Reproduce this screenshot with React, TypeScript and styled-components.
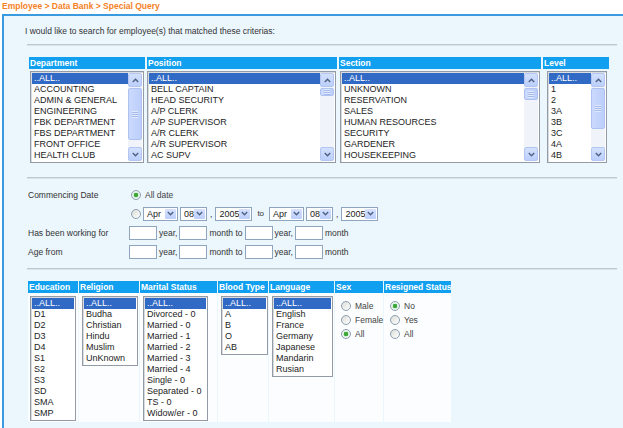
import styled, { createGlobalStyle } from "styled-components";

const GlobalStyle = createGlobalStyle`
  html, body {
    margin: 0;
    padding: 0;
    background: #ffffff;
    overflow: hidden;
  }
  body {
    font-family: "Liberation Sans", Arial, sans-serif;
    font-size: 8.5px;
    color: #333;
  }
`;

type Scroll = { top: number; size: number };

type ListProps = {
	items: string[];
	width: number;
	scroll?: Scroll;
};

const departments = ["..ALL..", "ACCOUNTING", "ADMIN & GENERAL", "ENGINEERING", "FBK DEPARTMENT", "FBS DEPARTMENT", "FRONT OFFICE", "HEALTH CLUB"];
const positions = ["..ALL..", "BELL CAPTAIN", "HEAD SECURITY", "A/P CLERK", "A/P SUPERVISOR", "A/R CLERK", "A/R SUPERVISOR", "AC SUPV"];
const sections = ["..ALL..", "UNKNOWN", "RESERVATION", "SALES", "HUMAN RESOURCES", "SECURITY", "GARDENER", "HOUSEKEEPING"];
const levels = ["..ALL..", "1", "2", "3A", "3B", "3C", "4A", "4B"];

const education = ["..ALL..", "D1", "D2", "D3", "D4", "S1", "S2", "S3", "SD", "SMA", "SMP"];
const religion = ["..ALL..", "Budha", "Christian", "Hindu", "Muslim", "UnKnown"];
const marital = [
	"..ALL..",
	"Divorced - 0",
	"Married - 0",
	"Married - 1",
	"Married - 2",
	"Married - 3",
	"Married - 4",
	"Single - 0",
	"Separated - 0",
	"TS - 0",
	"Widow/er - 0",
];
const blood = ["..ALL..", "A", "B", "O", "AB"];
const language = ["..ALL..", "English", "France", "Germany", "Japanese", "Mandarin", "Rusian"];

const Chevron = ({ up }: { up?: boolean }) => (
	<svg width="7" height="5" viewBox="0 0 7 5">
		<polyline
			points={up ? "0.8,4 3.5,1.3 6.2,4" : "0.8,1 3.5,3.7 6.2,1"}
			fill="none"
			stroke="#4d6185"
			strokeWidth="1.4"
		/>
	</svg>
);

const ListBox = ({ items, width, scroll }: ListProps) => (
	<Box $width={width}>
		<Items>
			{items.map((item, i) => (
				<Item key={item} $selected={i === 0}>
					{item}
				</Item>
			))}
		</Items>
		{scroll && (
			<ScrollBar>
				<ScrollButton>
					<Chevron up />
				</ScrollButton>
				<Track>
					<Thumb style={{ marginTop: scroll.top, height: scroll.size }} />
				</Track>
				<ScrollButton>
					<Chevron />
				</ScrollButton>
			</ScrollBar>
		)}
	</Box>
);

const Combo = ({ value, width }: { value: string; width: number }) => (
	<ComboBox $width={width}>
		<ComboValue>{value}</ComboValue>
		<ComboArrow>
			<Chevron />
		</ComboArrow>
	</ComboBox>
);

const RadioOption = ({ label, checked }: { label: string; checked?: boolean }) => (
	<RadioLine>
		<Radio $checked={checked} />
		<span>{label}</span>
	</RadioLine>
);

const DurationInputs = () => (
	<Controls>
		<TextInput />
		<Unit>year,</Unit>
		<TextInput />
		<Unit>month to</Unit>
		<TextInput />
		<Unit>year,</Unit>
		<TextInput />
		<Unit>month</Unit>
	</Controls>
);

export default function App() {
	return (
		<>
			<GlobalStyle />
			<Breadcrumb>Employee &gt; Data Bank &gt; Special Query</Breadcrumb>
			<Panel>
				<Intro>I would like to search for employee(s) that matched these criterias:</Intro>
				<Divider />

				<TopGrid>
					<Column>
						<HeaderBar>Department</HeaderBar>
						<TopCell $indent={1}>
							<ListBox items={departments} width={114} scroll={{ top: 1, size: 52 }} />
						</TopCell>
					</Column>
					<Column>
						<HeaderBar>Position</HeaderBar>
						<TopCell $indent={0}>
							<ListBox items={positions} width={189} scroll={{ top: 1, size: 8 }} />
						</TopCell>
					</Column>
					<Column>
						<HeaderBar>Section</HeaderBar>
						<TopCell $indent={1}>
							<ListBox items={sections} width={200} scroll={{ top: 1, size: 12 }} />
						</TopCell>
					</Column>
					<Column>
						<HeaderBar>Level</HeaderBar>
						<TopCell $indent={4}>
							<ListBox items={levels} width={60} scroll={{ top: 1, size: 41 }} />
						</TopCell>
					</Column>
				</TopGrid>

				<Divider $gap={14} />

				<Form>
					<Label>Commencing Date</Label>
					<Controls>
						<RadioOption label="All date" checked />
					</Controls>
					<Label />
					<Controls>
						<Radio />
						<DateGroup>
							<Combo value="Apr" width={35} />
							<Combo value="08" width={27} />
							<Sep>,</Sep>
							<Combo value="2005" width={37} />
							<ToText>to</ToText>
							<Combo value="Apr" width={35} />
							<Combo value="08" width={27} />
							<Sep>,</Sep>
							<Combo value="2005" width={37} />
						</DateGroup>
					</Controls>
					<Label>Has been working for</Label>
					<DurationInputs />
					<Label>Age from</Label>
					<DurationInputs />
				</Form>

				<Divider $gap={7} />

				<BottomGrid>
					<Column>
						<HeaderBar>Education</HeaderBar>
						<BottomCell $indent={2}>
							<ListBox items={education} width={46} />
						</BottomCell>
					</Column>
					<Column>
						<HeaderBar>Religion</HeaderBar>
						<BottomCell $indent={3}>
							<ListBox items={religion} width={56} />
						</BottomCell>
					</Column>
					<Column>
						<HeaderBar>Marital Status</HeaderBar>
						<BottomCell $indent={3}>
							<ListBox items={marital} width={65} />
						</BottomCell>
					</Column>
					<Column>
						<HeaderBar>Blood Type</HeaderBar>
						<BottomCell $indent={3}>
							<ListBox items={blood} width={47} />
						</BottomCell>
					</Column>
					<Column>
						<HeaderBar>Language</HeaderBar>
						<BottomCell $indent={3}>
							<ListBox items={language} width={61} />
						</BottomCell>
					</Column>
					<Column>
						<HeaderBar>Sex</HeaderBar>
						<RadioCell>
							<RadioOption label="Male" />
							<RadioOption label="Female" />
							<RadioOption label="All" checked />
						</RadioCell>
					</Column>
					<Column>
						<HeaderBar>Resigned Status</HeaderBar>
						<RadioCell>
							<RadioOption label="No" checked />
							<RadioOption label="Yes" />
							<RadioOption label="All" />
						</RadioCell>
					</Column>
				</BottomGrid>
			</Panel>
		</>
	);
}

const Breadcrumb = styled.div`
	height: 14px;
	line-height: 13px;
	padding-left: 2px;
	font-size: 8.5px;
	font-weight: bold;
	color: #f5811f;
	white-space: nowrap;
`;

const Panel = styled.div`
	margin-left: 2px;
	width: calc(100vw - 2px);
	height: calc(100vh - 14px);
	overflow: hidden;
	box-sizing: border-box;
	border-top: 2px solid #3a9ae0;
	border-left: 2px solid #3a9ae0;
	background: #ebf6fd;
	padding: 10px 0 0 23px;
`;

const Intro = styled.div`
	margin-left: -2px;
	line-height: 11px;
	color: #333;
`;

const Divider = styled.div<{ $gap?: number }>`
	margin-top: ${(p) => p.$gap ?? 7}px;
	width: 590px;
	border-top: 1px solid #bcc9d1;
	border-bottom: 1px solid #d8e3ea;
`;

const TopGrid = styled.div`
	margin: 11px 0 0 2px;
	display: grid;
	grid-template-columns: 116px 190px 202px 66px;
	column-gap: 2px;
`;

const BottomGrid = styled.div`
	margin: 11px 0 0 1px;
	display: grid;
	grid-template-columns: 50px 60px 77px 50px 65px 48px 67px;
	column-gap: 1px;
	align-items: stretch;
`;

const Column = styled.div`
	display: flex;
	flex-direction: column;
`;

const HeaderBar = styled.div`
	height: 12px;
	line-height: 12px;
	padding-left: 1px;
	background: #119ff0;
	color: #ffffff;
	font-weight: bold;
	font-size: 8.5px;
	white-space: nowrap;
	overflow: hidden;
`;

const TopCell = styled.div<{ $indent: number }>`
	padding: 2px 0 0 ${(p) => p.$indent}px;
`;

const BottomCell = styled.div<{ $indent: number }>`
	flex: 1;
	background: #fbfdfe;
	padding: 3px 0 1px ${(p) => p.$indent}px;
`;

const RadioCell = styled.div`
	flex: 1;
	background: #fbfdfe;
	padding: 6px 0 0 4px;
	display: flex;
	flex-direction: column;
`;

const Box = styled.div<{ $width: number }>`
	width: ${(p) => p.$width}px;
	box-sizing: border-box;
	display: flex;
	border: 1px solid #939ca6;
	padding: 1px;
	background: #ffffff;
	box-shadow: inset 1px 1px 0 #d9dcdf;
`;

const Items = styled.div`
	flex: 1;
	min-width: 0;
	overflow: hidden;
`;

const Item = styled.div<{ $selected?: boolean }>`
	height: 11px;
	line-height: 11px;
	padding-left: 2px;
	font-size: 9px;
	white-space: nowrap;
	color: ${(p) => (p.$selected ? "#ffffff" : "#1c1c1c")};
	background: ${(p) => (p.$selected ? "#316ac5" : "transparent")};
`;

const ScrollBar = styled.div`
	width: 14px;
	display: flex;
	flex-direction: column;
	background: #f2f4fa;
`;

const ScrollButton = styled.div`
	height: 14px;
	box-sizing: border-box;
	display: flex;
	align-items: center;
	justify-content: center;
	background: linear-gradient(#d3e0fd, #bccffb);
	border: 1px solid #b3c6f3;
	border-radius: 2px;
`;

const Track = styled.div`
	flex: 1;
	display: flex;
	flex-direction: column;
	background: #f1f3fa;
`;

const Thumb = styled.div`
	box-sizing: border-box;
	border: 1px solid #aec2f2;
	border-radius: 2px;
	background: linear-gradient(90deg, #cbd9fd, #bccefa);
	display: flex;
	align-items: center;
	justify-content: center;

	&::after {
		content: "";
		width: 6px;
		height: 7px;
		max-height: 100%;
		background: repeating-linear-gradient(#e9effd 0 1px, #9eb4e6 1px 2px);
		opacity: 0.8;
	}
`;

const Form = styled.div`
	margin: 6px 0 0 1px;
	display: grid;
	grid-template-columns: 101px 1fr;
	grid-auto-rows: 19px;
	align-items: center;
`;

const Label = styled.div`
	color: #333;
	white-space: nowrap;
`;

const Controls = styled.div`
	display: flex;
	align-items: center;
`;

const RadioLine = styled.label`
	display: flex;
	align-items: center;
	height: 14px;
	gap: 4px;
	color: #444;
	white-space: nowrap;
`;

const Radio = styled.span<{ $checked?: boolean }>`
	width: 10px;
	height: 10px;
	margin-left: 2px;
	box-sizing: border-box;
	border-radius: 50%;
	border: 1px solid #8d9fb3;
	background: ${(p) =>
		p.$checked
			? "radial-gradient(circle, #3aa83a 0 2px, #d7efd7 2.5px, #f4f6f4 4px)"
			: "linear-gradient(135deg, #dcdcd6, #ffffff)"};
	flex-shrink: 0;
`;

const DateGroup = styled.div`
	display: flex;
	align-items: center;
	gap: 2px;
	margin-left: 2px;
`;

const ComboBox = styled.div<{ $width: number }>`
	width: ${(p) => p.$width}px;
	height: 14px;
	box-sizing: border-box;
	display: flex;
	align-items: center;
	border: 1px solid #8ea5bd;
	background: #ffffff;
`;

const ComboValue = styled.span`
	flex: 1;
	padding-left: 3px;
	font-size: 9px;
	color: #222;
`;

const ComboArrow = styled.span`
	width: 11px;
	height: 10px;
	margin-right: 1px;
	display: flex;
	align-items: center;
	justify-content: center;
	background: linear-gradient(#d5e1fd, #bccffb);
	border-radius: 1px;
`;

const Sep = styled.span`
	margin: 0 1px;
	color: #333;
`;

const ToText = styled.span`
	margin: 0 3px;
	font-size: 8px;
	color: #333;
`;

const TextInput = styled.span`
	width: 28px;
	height: 14px;
	box-sizing: border-box;
	border: 1px solid #8ea5bd;
	background: #ffffff;
	margin-left: 2px;

	&:first-child {
		margin-left: 0;
	}
`;

const Unit = styled.span`
	margin-left: 2px;
	color: #333;
	white-space: nowrap;
`;
